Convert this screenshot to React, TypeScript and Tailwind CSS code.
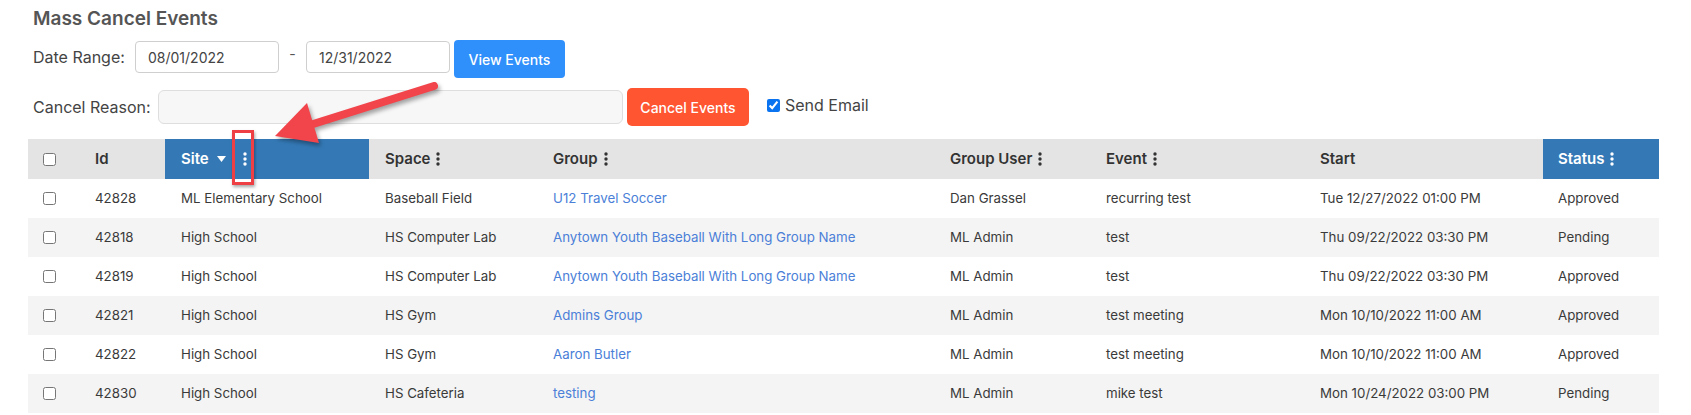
import React from "react";

const Dots = ({ color = "#333" }: { color?: string }) => (
  <svg width="4" height="14" viewBox="0 0 4 14" className="ml-[6px] shrink-0">
    <circle cx="2" cy="2" r="1.7" fill={color} />
    <circle cx="2" cy="7" r="1.7" fill={color} />
    <circle cx="2" cy="12" r="1.7" fill={color} />
  </svg>
);

type Row = {
  id: string;
  site: string;
  space: string;
  group: string;
  user: string;
  event: string;
  start: string;
  status: string;
};

const rows: Row[] = [
  { id: "42828", site: "ML Elementary School", space: "Baseball Field", group: "U12 Travel Soccer", user: "Dan Grassel", event: "recurring test", start: "Tue 12/27/2022 01:00 PM", status: "Approved" },
  { id: "42818", site: "High School", space: "HS Computer Lab", group: "Anytown Youth Baseball With Long Group Name", user: "ML Admin", event: "test", start: "Thu 09/22/2022 03:30 PM", status: "Pending" },
  { id: "42819", site: "High School", space: "HS Computer Lab", group: "Anytown Youth Baseball With Long Group Name", user: "ML Admin", event: "test", start: "Thu 09/22/2022 03:30 PM", status: "Approved" },
  { id: "42821", site: "High School", space: "HS Gym", group: "Admins Group", user: "ML Admin", event: "test meeting", start: "Mon 10/10/2022 11:00 AM", status: "Approved" },
  { id: "42822", site: "High School", space: "HS Gym", group: "Aaron Butler", user: "ML Admin", event: "test meeting", start: "Mon 10/10/2022 11:00 AM", status: "Approved" },
  { id: "42830", site: "High School", space: "HS Cafeteria", group: "testing", user: "ML Admin", event: "mike test", start: "Mon 10/24/2022 03:00 PM", status: "Pending" },
];

const cols = "grid grid-cols-[51px_86px_204px_168px_397px_156px_214px_239px_116px]";

export default function App() {
  return (
    <div
      className="relative w-[1691px] h-[415px] overflow-hidden bg-white text-[#333]"
      style={{ fontFamily: "Inter, 'Noto Sans', sans-serif" }}
    >
      <div className="px-[28px]">
        <div className="pl-[5px] pt-[7px]">
          <h1 className="text-[19px] leading-[24px] font-semibold text-[#555]">Mass Cancel Events</h1>

          <div className="mt-[10px] flex items-start h-[38px]">
            <span className="text-[16px] leading-[32px] text-[#444] w-[102px]">Date Range:</span>
            <div className="w-[144px] h-[32px] rounded-[4px] border border-[#cfcfcf] pl-[12px] flex items-center text-[14px] text-[#444]">
              08/01/2022
            </div>
            <span className="w-[27px] text-center text-[14px] leading-[26px] text-[#555]">-</span>
            <div className="w-[144px] h-[32px] rounded-[4px] border border-[#cfcfcf] pl-[12px] flex items-center text-[14px] text-[#444]">
              12/31/2022
            </div>
            <button className="ml-[4px] w-[111px] h-[38px] -mt-[1px] rounded-[4px] bg-[#2f8ffb] text-white text-[14px] font-medium">
              View Events
            </button>
          </div>

          <div className="mt-[9px] flex items-center h-[38px]">
            <span className="text-[16px] text-[#444] w-[125px]">Cancel Reason:</span>
            <div className="w-[465px] h-[34px] rounded-[6px] border border-[#dedede] bg-[#f7f7f7]" />
            <button className="ml-[4px] w-[122px] h-[38px] rounded-[5px] bg-[#ff5530] text-white text-[14px] font-medium">
              Cancel Events
            </button>
            <div className="ml-[18px] flex items-center -mt-[4px]">
              <input type="checkbox" defaultChecked className="w-[13px] h-[13px] accent-[#0a74f0]" />
              <span className="ml-[5px] text-[16px] text-[#444]">Send Email</span>
            </div>
          </div>
        </div>

        <div className="mt-[13px] w-[1631px] text-[13.3px]">
          <div className={`${cols} h-[40px] bg-[#e4e4e4] font-semibold text-[15px] text-[#333]`}>
            <div className="flex items-center pl-[15px]">
              <input type="checkbox" className="w-[13px] h-[13px]" />
            </div>
            <div className="flex items-center pl-[16px]">Id</div>
            <div className="flex items-center pl-[16px] bg-[#3479b6] text-white">
              Site
              <svg width="9" height="6" viewBox="0 0 9 6" className="ml-[8px]">
                <polygon points="0,0 9,0 4.5,6" fill="#fff" />
              </svg>
              <span className="ml-[11px]">
                <Dots color="#fff" />
              </span>
            </div>
            <div className="flex items-center pl-[16px]">
              Space
              <Dots />
            </div>
            <div className="flex items-center pl-[16px]">
              Group
              <Dots />
            </div>
            <div className="flex items-center pl-[16px]">
              Group User
              <Dots />
            </div>
            <div className="flex items-center pl-[16px]">
              Event
              <Dots />
            </div>
            <div className="flex items-center pl-[16px]">Start</div>
            <div className="flex items-center pl-[15px] bg-[#3479b6] text-white">
              Status
              <Dots color="#fff" />
            </div>
          </div>

          {rows.map((r, i) => (
            <div key={r.id + i} className={`${cols} h-[39px] text-[#3a3a3a] ${i % 2 === 1 ? "bg-[#f4f4f4]" : "bg-white"}`}>
              <div className="flex items-center pl-[15px]">
                <input type="checkbox" className="w-[13px] h-[13px]" />
              </div>
              <div className="flex items-center pl-[16px]">{r.id}</div>
              <div className="flex items-center pl-[16px]">{r.site}</div>
              <div className="flex items-center pl-[16px]">{r.space}</div>
              <div className="flex items-center pl-[16px] text-[#4b7fd8]">{r.group}</div>
              <div className="flex items-center pl-[16px]">{r.user}</div>
              <div className="flex items-center pl-[16px]">{r.event}</div>
              <div className="flex items-center pl-[16px]">{r.start}</div>
              <div className="flex items-center pl-[15px]">{r.status}</div>
            </div>
          ))}
        </div>
      </div>

      {/* annotation: red box around Site menu dots */}
      <div className="absolute left-[232px] top-[130px] w-[22px] h-[55px] border-[3px] border-[#ee3f45] shadow-[1px_2px_3px_rgba(0,0,0,0.35)] pointer-events-none" />

      {/* annotation: arrow */}
      <svg
        className="absolute left-0 top-0 pointer-events-none"
        width="1691"
        height="415"
        viewBox="0 0 1691 415"
        style={{ filter: "drop-shadow(2px 3px 2px rgba(0,0,0,0.35))" }}
      >
        <line x1="434" y1="86" x2="310" y2="125" stroke="#f2444b" strokeWidth="8" strokeLinecap="round" />
        <polygon points="275,136 307,103 319,143" fill="#f2444b" />
      </svg>
    </div>
  );
}
